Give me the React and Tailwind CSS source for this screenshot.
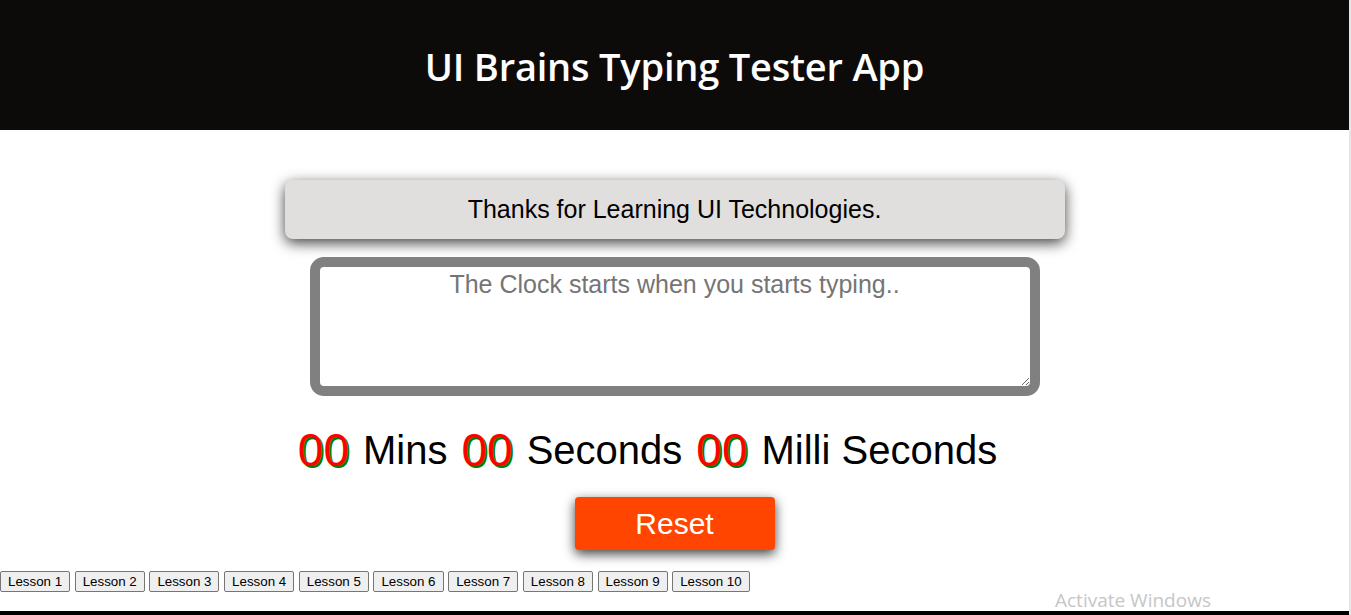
import React, { useState } from 'react';

const LESSONS = ['Lesson 1', 'Lesson 2', 'Lesson 3', 'Lesson 4', 'Lesson 5', 'Lesson 6', 'Lesson 7', 'Lesson 8', 'Lesson 9', 'Lesson 10'];

// Red digits with a green drop shadow
const Digits = ({ value }) => (
  <span className="text-[46px] text-[#ff0000] [text-shadow:2px_2px_0_#008000]">{value}</span>
);

export default function App() {
  const [text, setText] = useState('');

  return (
    <div className="relative min-h-screen flex flex-col bg-white font-['Liberation_Sans',Arial,sans-serif] border-r-[2px] border-[#e6e6e6]">
      {/* Header */}
      <header className="h-[130px] bg-[#0d0b0a] flex items-center justify-center">
        <h1 className="text-white text-[38px] font-semibold tracking-[-0.2px] font-['Open_Sans','Noto_Sans',sans-serif] mt-[2px]">
          UI Brains Typing Tester App
        </h1>
      </header>

      <main className="flex flex-col items-center">
        {/* Sentence to type */}
        <div className="mt-[50px] w-[780px] h-[59px] rounded-[8px] bg-[#e0dfde] shadow-[0_4px_14px_rgba(0,0,0,0.75)] flex items-center justify-center">
          <p className="text-[25px] text-black">Thanks for Learning UI Technologies.</p>
        </div>

        {/* Typing area */}
        <textarea
          value={text}
          onChange={(e) => setText(e.target.value)}
          placeholder="The Clock starts when you starts typing.."
          className="mt-[18px] w-[730px] h-[139px] border-[10px] border-[#808080] rounded-[14px] px-[6px] pt-[3px] text-[25px] text-center leading-[28px] placeholder:text-[#757575] outline-none bg-white"
        />

        {/* Timer */}
        <div className="mt-[27px] pr-[54px] h-[54px] flex items-end gap-[14px] text-[40px] text-black leading-[54px]">
          <Digits value="00" />
          <span>Mins</span>
          <Digits value="00" />
          <span>Seconds</span>
          <Digits value="00" />
          <span>Milli Seconds</span>
        </div>

        <button
          onClick={() => setText('')}
          className="mt-[20px] w-[200px] h-[53px] rounded-[4px] bg-[#ff4500] text-white text-[30px] shadow-[0_4px_12px_rgba(0,0,0,0.75)]"
        >
          Reset
        </button>
      </main>

      {/* Lesson picker */}
      <div className="mt-[21px] flex gap-[4.6px] items-center">
        {LESSONS.map((l) => (
          <button
            key={l}
            className="h-[21px] px-[7px] border border-[#767676] rounded-[2px] bg-[#efefef] text-[13.33px] leading-[16px] text-black"
          >
            {l}
          </button>
        ))}
      </div>

      <div className="flex-1" />
      <div className="h-[4px] bg-black" />

      {/* Windows watermark */}
      <div className="absolute left-[1055px] top-[586px] text-[19px] text-[#c6c6c6] font-['Open_Sans','Noto_Sans',sans-serif] pointer-events-none">
        Activate Windows
      </div>
    </div>
  );
}
